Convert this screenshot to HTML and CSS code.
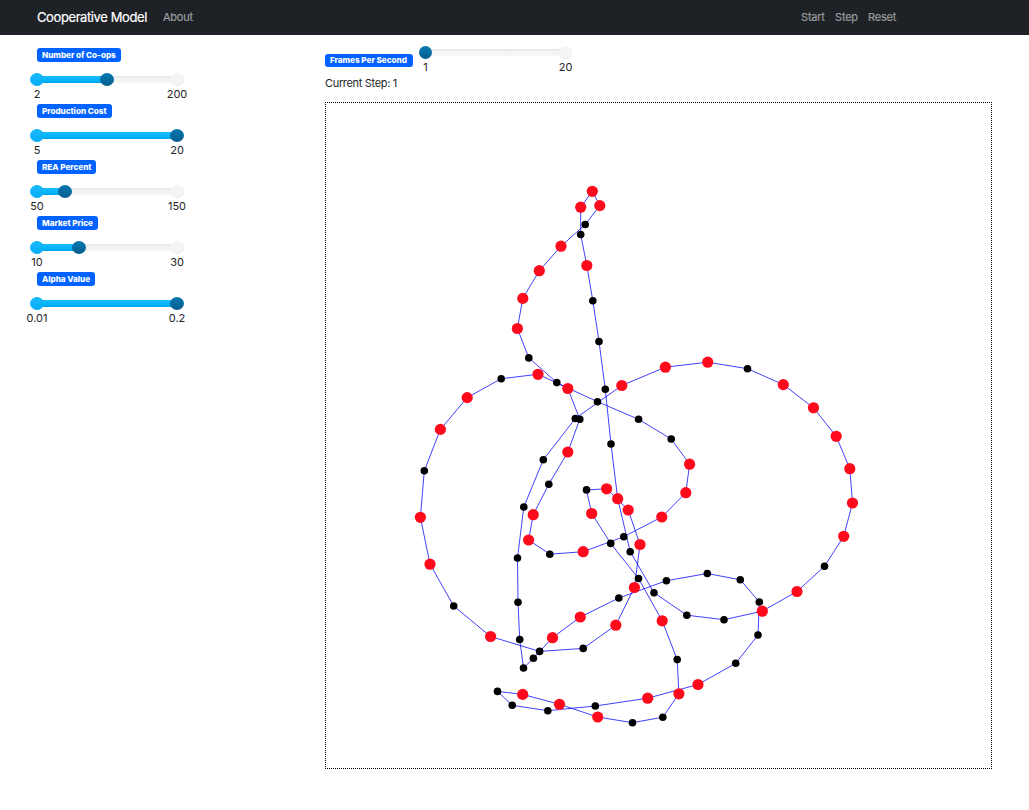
FILE: index.html
```html
<!DOCTYPE html>
<html lang="en">
<head>
<meta charset="utf-8">
<title>Cooperative Model</title>
<link rel="stylesheet" href="styles.css">
</head>
<body>
<nav class="navbar">
  <a class="brand">Cooperative Model</a>
  <a class="link">About</a>
  <div class="actions"><a class="link start">Start</a><a class="link step">Step</a><a class="link">Reset</a></div>
</nav>
<main class="layout">
  <aside class="controls">
    <section class="control"><span class="badge">Number of Co-ops</span>
      <div class="slider half"><div class="track"><i class="dot on"></i><i class="fill"></i><i class="dot handle"></i><i class="rest"></i><i class="dot end"></i></div><div class="ticks"><span>2</span><span>200</span></div></div></section>
    <section class="control"><span class="badge">Production Cost</span>
      <div class="slider full"><div class="track"><i class="dot on"></i><i class="fill"></i><i class="dot handle"></i></div><div class="ticks"><span>5</span><span>20</span></div></div></section>
    <section class="control"><span class="badge">REA Percent</span>
      <div class="slider fifth"><div class="track"><i class="dot on"></i><i class="fill"></i><i class="dot handle"></i><i class="rest"></i><i class="dot end"></i></div><div class="ticks"><span>50</span><span>150</span></div></div></section>
    <section class="control"><span class="badge">Market Price</span>
      <div class="slider third"><div class="track"><i class="dot on"></i><i class="fill"></i><i class="dot handle"></i><i class="rest"></i><i class="dot end"></i></div><div class="ticks"><span>10</span><span>30</span></div></div></section>
    <section class="control"><span class="badge">Alpha Value</span>
      <div class="slider full"><div class="track"><i class="dot on"></i><i class="fill"></i><i class="dot handle"></i></div><div class="ticks"><span>0.01</span><span>0.2</span></div></div></section>
  </aside>
  <section class="model">
    <div class="fps"><span class="badge">Frames Per Second</span>
      <div class="slider"><div class="track"><i class="dot handle"></i><i class="rest"></i><i class="dot end"></i></div><div class="ticks"><span>1</span><span>20</span></div></div></div>
    <p class="current">Current Step: 1</p>
    <svg class="network" id="network" viewBox="326 103 665 665"></svg>
  </section>
</main>
<script src="network.js"></script>
</body>
</html>
```
FILE: styles.css
```css
* { box-sizing: border-box; }
body { margin: 0; background: #fff; color: #212529; font: 11px/16px Inter, "Liberation Sans", sans-serif; }
.navbar { height: 35px; background: #1e2226; display: flex; align-items: center; padding: 0 133px 2px 37px; }
.brand { color: #fff; font-size: 13px; letter-spacing: -.4px; width: 126px; white-space: nowrap; -webkit-text-stroke: .2px #fff; }
.link { color: #999b9d; padding-top: 1px; letter-spacing: -.25px; -webkit-text-stroke: .2px #999b9d; }
.actions { display: flex; margin-left: auto; }
.start { width: 34px; }
.step { width: 33px; }
.layout { display: flex; }
.controls { width: 325px; padding: 13px 0 0 37px; }
.control { height: 56px; }
.badge { display: block; width: fit-content; height: 14px; padding: 0 5px; border-radius: 3px; background: #0062ff; color: #fff; font-size: 8.2px; line-height: 14px; font-weight: 800; letter-spacing: -.06px; white-space: nowrap; }
.slider { width: 140px; }
.control .slider { padding-top: 11px; }
.track { display: flex; align-items: center; height: 13px; margin: 0 -7px; }
.dot { width: 14px; height: 13px; border-radius: 50%; flex: none; position: relative; z-index: 1; }
.on { background: linear-gradient(#1bb9fb, #03adf4); }
.handle { background: linear-gradient(#0878b0, #045f8f); }
.end { background: #f5f5f5; box-shadow: inset 0 -1px 0 #ececec; }
.fill, .rest { height: 7px; margin: 0 -7px; }
.fill { background: linear-gradient(#18b9fb, #03b1f8 75%, #03a5e6); flex: none; width: 140px; }
.rest { flex: 1; background: linear-gradient(#e3e3e3, #f4f4f4 30%, #f6f6f6); }
.half .fill { width: 69.5px; }
.fifth .fill { width: 28px; }
.third .fill { width: 42px; }
.ticks { display: flex; justify-content: space-between; padding-top: 1px; line-height: 15px; }
.ticks span { width: 0; display: flex; justify-content: center; white-space: nowrap; }
.model { padding-top: 11px; }
.fps { display: flex; height: 30px; }
.fps .badge { margin-top: 8px; width: 88px; height: 13px; line-height: 13px; margin-right: 12.5px; }
.fps .dot { width: 13px; }
.fps .track { margin: 0 -6.5px; }
.current { margin: 0; height: 26px; line-height: 15px; letter-spacing: -.33px; }
.network { display: block; width: 667px; height: 667px; border: 1px dotted #000; }
.network path { fill: none; stroke: #00f; stroke-opacity: .75; stroke-width: 1; }
```
FILE: network.js
```js
// Nodes in ring order: x, y, and 1 for a highlighted node
const nodes = [
[592.3,191.3,1],[580.7,207.2,1],[580.7,234.5,0],[586.8,265.5,1],[592.8,300.7,0],[599,341.5,0],[605.3,389.3,0],[611,444,0],[617.7,498.7,1],[630.2,551.7,0],
[654,592.7,0],[686.8,615.2,0],[724,619.7,0],[762.3,611.2,1],[797,591.5,1],[824.5,566.3,0],[843.7,536.3,1],[852.5,503,1],[849.8,468.7,1],[836.2,436.3,1],
[813.5,407.8,1],[783.3,384.6,1],[747.5,368.7,0],[707.7,362.2,1],[665.4,367.2,1],[621.8,385.5,1],[575.3,418.5,0],[543.3,459.7,0],[523.8,507,0],[517.5,558,0],
[518,602.2,0],[519.7,639.5,0],[523.5,668,0],[533.4,658.3,0],[552.5,637.7,1],[580.3,617,1],[618.8,598,0],[666.4,580.7,0],[707.3,573.5,0],[740.3,579.8,0],
[759.3,602,0],[758,635,0],[735.7,663.3,0],[698,684.5,1],[647.7,698.2,1],[595.3,706,0],[547.8,710.7,0],[512.2,705.3,0],[497.5,691.4,0],[522.7,694.4,1],
[559.5,704.3,1],[597.7,717,1],[632.5,722.7,0],[662.8,717.2,0],[678.9,693.8,1],[677.2,659.6,0],[662.2,620.8,1],[638.5,578.5,0],[610.7,543.4,0],[591.7,513.5,1],
[586.5,489.9,0],[606.6,488.8,1],[628.2,510,1],[640,544.5,1],[634.4,587.5,1],[615.8,625.2,1],[583.2,648.4,0],[539.6,651.4,0],[490.6,636.5,1],[453.7,606,0],
[430,564.2,1],[420.4,517.3,1],[424.3,470.8,0],[440.4,429.4,1],[467.2,397.6,1],[501.2,378.7,0],[538,374.3,1],[597.5,401.7,0],[638.6,419.3,0],
[671.2,439,0],[689.6,464.2,1],[685.8,492.7,1],[661.8,517,1],[623.8,536.7,0],[583.2,551.7,1],[549.8,554.2,0],[528.6,540,1],[533.2,514.7,1],[548.8,484.3,0],
[567.8,452,1],[579.8,419.2,0],[567.8,388.5,1],[556.8,382.6,0],[528.8,357.9,0],[517.4,328.5,1],[522.8,298.4,1],[539.3,270.7,1],[561,246.2,1],[585.2,224.5,0],[599.8,205.6,1]
];
const ring = '<path d="M' + nodes.map(n => n[0] + ' ' + n[1]).join('L') + 'Z"/>';
const dots = nodes.map(n => `<circle cx="${n[0]}" cy="${n[1]}" r="${n[2] ? 5.6 : 3.8}" fill="${n[2] ? '#ff0a1c' : '#000'}"/>`).join('');
document.getElementById('network').innerHTML = ring + dots;
```
